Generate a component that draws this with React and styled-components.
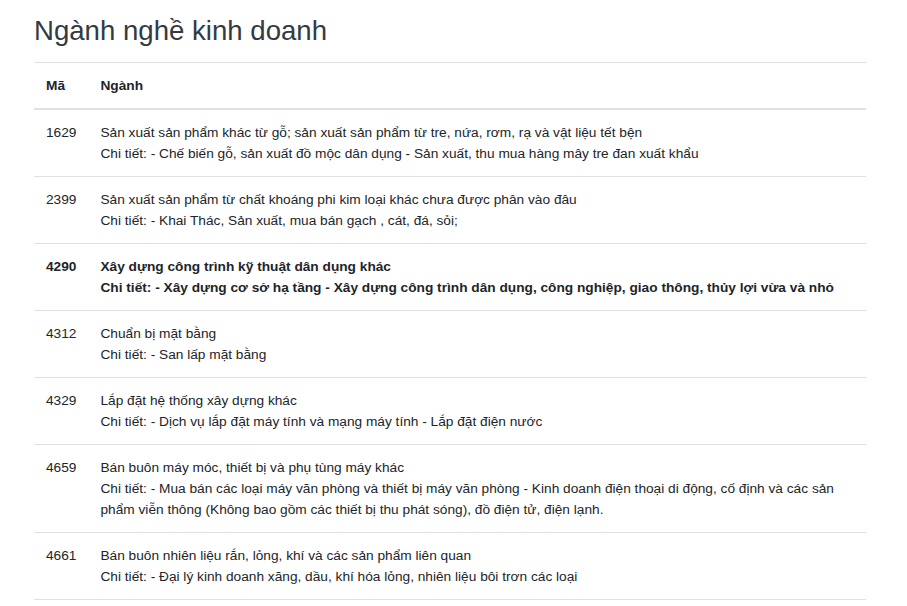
import React from 'react';
import styled, { createGlobalStyle } from 'styled-components';

const GlobalStyle = createGlobalStyle`
  body {
    margin: 0;
    background: #fff;
    font-family: "Liberation Sans", Arial, sans-serif;
    color: #212529;
  }
`;

const Page = styled.div`
  padding: 14px 41px 0 34px;
`;

const Title = styled.h3`
  margin: 0 0 14px;
  font-size: 27.6px;
  font-weight: 400;
  line-height: 34px;
  color: #343a40;
`;

const Table = styled.table`
  width: 100%;
  border-collapse: collapse;
  font-size: 13.7px;
  line-height: 21px;
`;

const Th = styled.th`
  text-align: left;
  font-weight: 700;
  padding: 12px;
  vertical-align: bottom;
  border-top: 1px solid #dee2e6;
  border-bottom: 2px solid #dee2e6;
  color: #212529;
`;

const Td = styled.td`
  padding: 12px;
  vertical-align: top;
  border-top: 1px solid #dee2e6;
  font-weight: ${props => (props.$bold ? 700 : 400)};
`;

const Row = styled.tr`
  &:last-child td {
    border-bottom: 1px solid #dee2e6;
  }
`;

const nganh = [
  {
    ma: '1629',
    ten: 'Sản xuất sản phẩm khác từ gỗ; sản xuất sản phẩm từ tre, nứa, rơm, rạ và vật liệu tết bện',
    chiTiet: 'Chi tiết: - Chế biến gỗ, sản xuất đồ mộc dân dụng - Sản xuất, thu mua hàng mây tre đan xuất khẩu'
  },
  {
    ma: '2399',
    ten: 'Sản xuất sản phẩm từ chất khoáng phi kim loại khác chưa được phân vào đâu',
    chiTiet: 'Chi tiết: - Khai Thác, Sản xuất, mua bán gạch , cát, đá, sỏi;'
  },
  {
    ma: '4290',
    ten: 'Xây dựng công trình kỹ thuật dân dụng khác',
    chiTiet: 'Chi tiết: - Xây dựng cơ sở hạ tầng - Xây dựng công trình dân dụng, công nghiệp, giao thông, thủy lợi vừa và nhỏ',
    chinh: true
  },
  {
    ma: '4312',
    ten: 'Chuẩn bị mặt bằng',
    chiTiet: 'Chi tiết: - San lấp mặt bằng'
  },
  {
    ma: '4329',
    ten: 'Lắp đặt hệ thống xây dựng khác',
    chiTiet: 'Chi tiết: - Dịch vụ lắp đặt máy tính và mạng máy tính - Lắp đặt điện nước'
  },
  {
    ma: '4659',
    ten: 'Bán buôn máy móc, thiết bị và phụ tùng máy khác',
    chiTiet: 'Chi tiết: - Mua bán các loại máy văn phòng và thiết bị máy văn phòng - Kinh doanh điện thoại di động, cố định và các sản phẩm viễn thông (Không bao gồm các thiết bị thu phát sóng), đồ điện tử, điện lạnh.'
  },
  {
    ma: '4661',
    ten: 'Bán buôn nhiên liệu rắn, lỏng, khí và các sản phẩm liên quan',
    chiTiet: 'Chi tiết: - Đại lý kinh doanh xăng, dầu, khí hóa lỏng, nhiên liệu bôi trơn các loại'
  }
];

export default function App() {
  return (
    <Page>
      <GlobalStyle />
      <Title>Ngành nghề kinh doanh</Title>
      <Table>
        <thead>
          <tr>
            <Th>Mã</Th>
            <Th>Ngành</Th>
          </tr>
        </thead>
        <tbody>
          {nganh.map(n => (
            <Row key={n.ma}>
              <Td $bold={n.chinh}>{n.ma}</Td>
              <Td $bold={n.chinh}>
                {n.ten}
                <br />
                {n.chiTiet}
              </Td>
            </Row>
          ))}
        </tbody>
      </Table>
    </Page>
  );
}
